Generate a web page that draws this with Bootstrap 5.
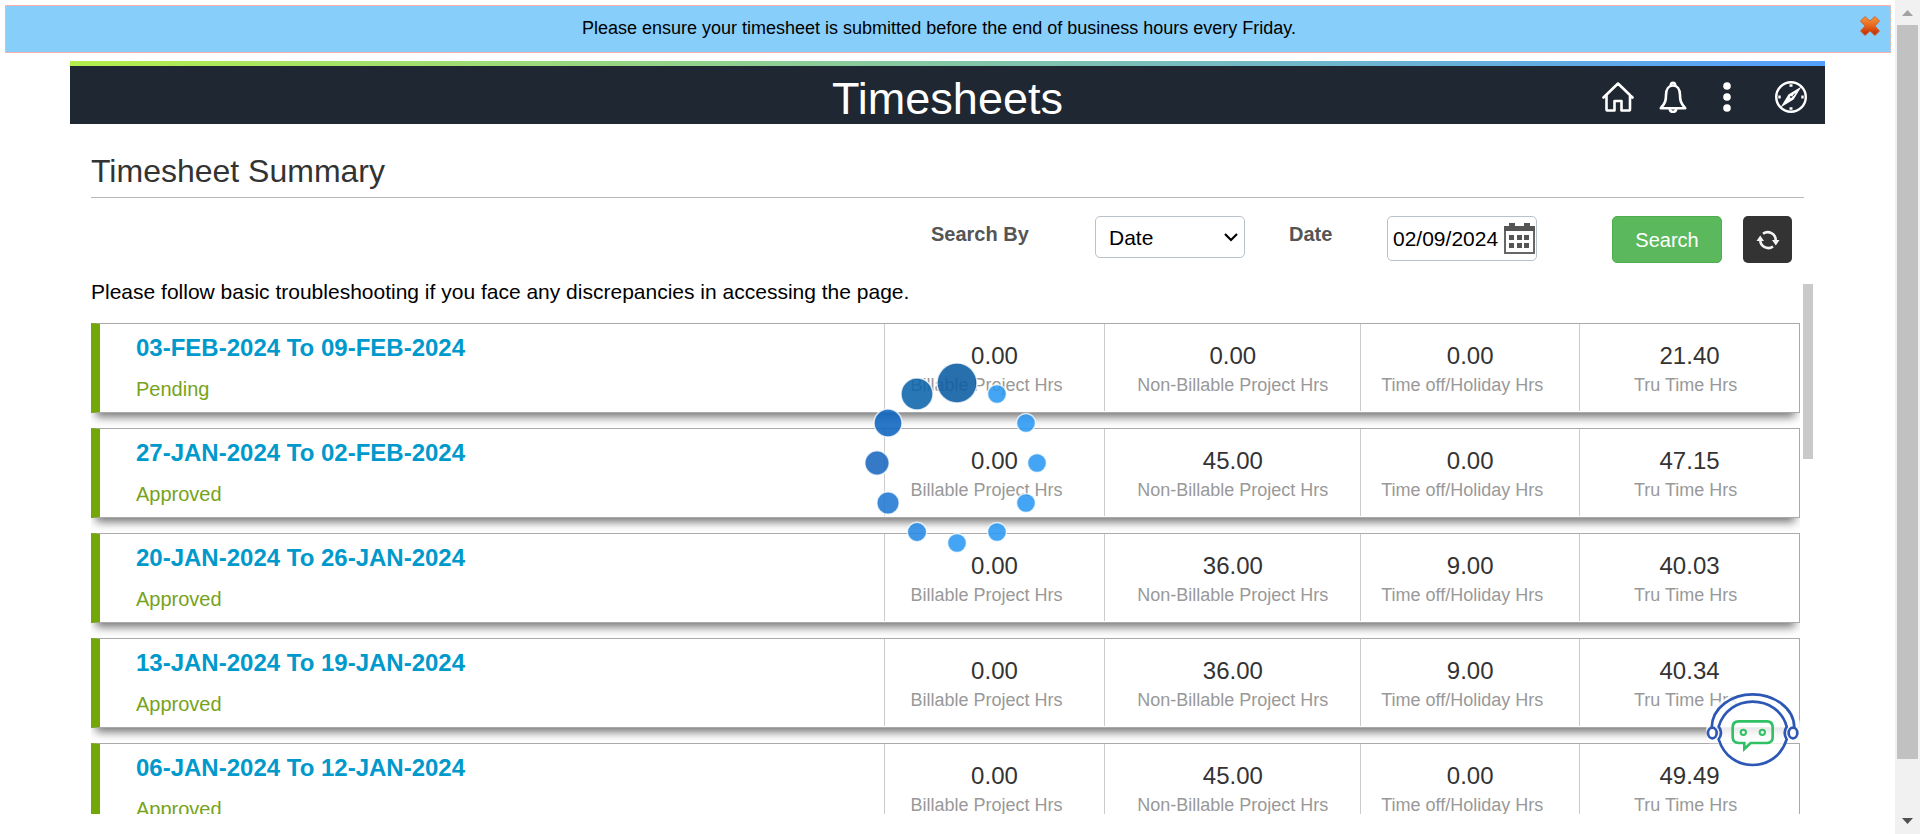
<!DOCTYPE html>
<html lang="en">
<head>
<meta charset="utf-8">
<meta name="viewport" content="width=device-width, initial-scale=1">
<title>Timesheets</title>
<link href="https://cdn.jsdelivr.net/npm/bootstrap@5.3.0/dist/css/bootstrap.min.css" rel="stylesheet">
<style>
  body { font-family: "Liberation Sans", Arial, sans-serif; color: #000; background: #fff; }
  .page-main { padding: 5px 0 20px; min-width: 0; }
  .notice-bar { flex-shrink: 0; margin: 0 4px 8px 5px; height: 48px; padding: 0 3px 0 21px; background: #87cefa; border: 1px dotted #ffb6b0; font-size: 18px; line-height: 24px; }
  .notice-text { padding-top: 10px; }
  .notice-close { width: 36px; height: 32px; padding: 7px 8px 0; line-height: 1; }
  .notice-close svg { display: block; }
  .frame { margin: 0 70px; min-height: 0; }
  .rainbow { height: 5px; flex-shrink: 0; background: linear-gradient(to right, #b4ee4b, #539fff); }
  .app-header { display: grid; grid-template-columns: 1fr auto 1fr; flex-shrink: 0; height: 58px; padding: 4px 18px 0; background: #1e2732; color: #fff; }
  .app-title { font-size: 45px; line-height: 58px; font-weight: 400; margin: 0; }
  .tool-icons { gap: 24px; height: 54px; }
  .tool-icons svg { display: block; }
  .tool-last { margin-left: 11px; }
  .sheet { padding: 0 21px; min-height: 0; }
  .summary-title { font-size: 32px; line-height: 44px; padding: 25px 0 4px; margin: 0; color: #333; font-weight: 400; border-bottom: 1px solid #b8b8b8; }
  .filters { padding: 18px 12px 17px 0; font-size: 20px; }
  .filters label { font-weight: 700; color: #555; line-height: 36px; font-size: 20px; }
  .label-by { width: 164px; }
  .label-date { width: 98px; margin-left: 44px; }
  .filters .by-select { width: 150px; height: 42px; font-size: 21px; line-height: 24px; padding: 5px 32px 4px 13px; color: #000; border-color: #b9c1cb; border-radius: 5px; background-image: url("data:image/svg+xml,%3Csvg xmlns='http://www.w3.org/2000/svg' viewBox='0 0 16 16'%3E%3Cpath d='M2 5l6 6 6-6' fill='none' stroke='%23000' stroke-width='2.2'/%3E%3C/svg%3E"); background-position: right 5px center; background-size: 16px 16px; }
  .date-box { width: 150px; height: 45px; border: 1px solid #b9c1cb; border-radius: 5px; padding: 0 1px 0 5px; }
  .date-box input { min-width: 0; width: 111px; border: 0; padding: 0; font-size: 21px; color: #000; background: none; }
  .date-box button { width: 31px; height: 31px; }
  .btn-find { width: 110px; height: 47px; margin-left: 75px; background: #5cb85c; border: 1px solid #4cae4c; border-radius: 5px; color: #fff; font-size: 20px; padding: 0; }
  .btn-reload { width: 49px; height: 47px; margin-left: 21px; background: #333; border-radius: 5px; padding: 0; }
  .list-shell { margin-right: -9px; gap: 3px; min-height: 0; }
  .list-view { overflow: hidden; min-width: 0; }
  .list-thumb { width: 10px; height: 175px; margin-top: 4px; background: #c9c9c9; }
  .hint { font-size: 21px; line-height: 24px; padding: 0 0 19px; margin: 0; }
  .sheet-card { display: grid; grid-template-columns: 784fr 221fr 256fr 219fr 220fr; height: 90px; margin-bottom: 15px; border: 1px solid #aaa; border-left: 9px solid #73a707; box-shadow: 0 9px 9px -5px rgba(0,0,0,.55); background: #fff; }
  .period { padding: 11px 0 0 36px; }
  .period a { display: block; width: max-content; font-size: 24px; line-height: 26px; font-weight: 700; color: #09c; text-decoration: none; }
  .period span { display: block; font-size: 20px; line-height: 24px; margin-top: 16px; color: #76a31b; }
  .hours { height: 87px; border-left: 1px solid #ccc; text-align: center; padding-top: 18px; }
  .hours strong { display: block; font-size: 24px; line-height: 28px; font-weight: 400; color: #333; }
  .hours span { display: block; font-size: 18px; line-height: 20px; margin-top: 5px; color: #999; white-space: nowrap; }
  .hours .nudge-lg { padding-right: 16px; }
  .hours .nudge-sm { padding-right: 8px; }
  .page-scroll { width: 25px; background: #f1f1f1; padding: 0 2px; }
  .page-scroll .grip { height: 88%; background: #c1c1c1; }
  .page-scroll svg { display: block; }
  .loader { left: calc(50% + 9px); top: calc(50% + 46px); transform: translate(-50%, -50%); pointer-events: none; }
  .bot-button { right: 118px; bottom: 67px; line-height: 0; }
</style>
</head>
<body>
<div class="d-flex vh-100 overflow-hidden position-relative">
  <main class="page-main flex-grow-1 d-flex flex-column position-relative">
    <div class="notice-bar d-flex align-items-start">
      <div class="notice-text flex-grow-1 text-center">Please ensure your timesheet is submitted before the end of business hours every Friday.</div>
      <button class="notice-close btn border-0 flex-shrink-0" type="button" aria-label="Close notice">
        <svg width="22" height="22" viewBox="0 0 22 22"><defs><linearGradient id="ember" x1="0" y1="1" x2="0" y2="21" gradientUnits="userSpaceOnUse"><stop offset="0" stop-color="#f79a3e"/><stop offset=".5" stop-color="#e8641c"/><stop offset="1" stop-color="#b82202"/></linearGradient></defs><path d="M6 1.5L11 6L16 1.5L20.500 6L16 11L20.500 16L16 20.500L11 16L6 20.500L1.500 16L6 11L1.500 6Z" fill="url(#ember)" stroke="#c8683a" stroke-width="1" stroke-linejoin="round"/></svg>
      </button>
    </div>
    <div class="frame flex-grow-1 d-flex flex-column">
      <div class="rainbow"></div>
      <header class="app-header">
        <span></span>
        <h1 class="app-title">Timesheets</h1>
        <nav class="tool-icons d-flex justify-content-end align-items-center" aria-label="Tools">
          <a href="#" aria-label="Home"><svg width="32" height="32" viewBox="0 0 32 32" fill="none" stroke="#fff" stroke-width="2.6" stroke-linecap="round" stroke-linejoin="round"><path d="M1.500 16.500L16 2.500L30.500 16.500M4.500 14V28.500Q4.500 29.500 6 29.500H12.500V20H19.500V29.500H26.500Q28 29.500 28 28.500V14"/></svg></a>
          <a href="#" aria-label="Notifications"><svg width="32" height="32" viewBox="0 0 32 32" fill="none" stroke="#fff" stroke-width="2.600" stroke-linejoin="round"><path d="M2.800 27.200C7.500 22 8 19 8 14C8 8 11 4.500 15 4.500S22 8 22 14C22 19 22.500 22 27.200 27.200Z"/><path d="M12.800 4.500Q12.800 1.800 15 1.800T17.200 4.500M11.500 28Q12.500 31 15 31T18.500 28"/></svg></a>
          <a href="#" aria-label="More actions"><svg width="26" height="32" viewBox="0 0 26 32" fill="#fff"><circle cx="13" cy="5" r="3.800"/><circle cx="13" cy="16" r="3.800"/><circle cx="13" cy="27" r="3.800"/></svg></a>
          <a href="#" aria-label="Navigator" class="tool-last"><svg width="32" height="32" viewBox="0 0 32 32" fill="none" stroke="#fff"><circle cx="16" cy="16" r="14.800" stroke-width="2.400"/><path d="M26.500 5.500L18.600 18.600L5.500 26.500L13.400 13.400Z" fill="#fff" stroke="none"/><path d="M14.500 4.500H17.500M14.500 27.500H17.500M4.500 14.500V17.500M27.500 14.500V17.500" stroke-width="2.400"/><path d="M17.500 15.500L20 12.500" stroke="#1e2732" stroke-width="1"/><circle cx="16" cy="16" r="1" fill="#1e2732" stroke="none"/></svg></a>
        </nav>
      </header>
      <div class="sheet flex-grow-1 d-flex flex-column">
        <h2 class="summary-title">Timesheet Summary</h2>
        <form class="filters d-flex justify-content-end align-items-start">
          <label class="label-by" for="search-by">Search By</label>
          <select class="form-select by-select" id="search-by"><option selected>Date</option><option>Status</option></select>
          <label class="label-date" for="search-date">Date</label>
          <div class="date-box d-flex align-items-center">
            <input type="text" id="search-date" value="02/09/2024">
            <button type="button" class="btn p-0 border-0 rounded-0 lh-1" aria-label="Choose date"><svg class="d-block" width="31" height="31" viewBox="0 0 31 31"><path d="M1 7H30V30H1Z" fill="#fff" stroke="#666" stroke-width="2"/><path d="M0 3H5V0H11V3H20V0H26V3H31V8H0Z" fill="#555"/><path d="M5 12H10V17H5ZM13 12H18V17H13ZM20 12H25V17H20ZM5 20H10V25H5ZM13 20H18V25H13ZM20 20H25V25H20Z" fill="#555"/></svg></button>
          </div>
          <button type="button" class="btn btn-find">Search</button>
          <button type="button" class="btn btn-reload border-0" aria-label="Refresh"><svg width="24" height="24" viewBox="0 0 24 24" fill="none" stroke="#f4f4f4" stroke-width="2.600"><path d="M4.300 12A8 8 0 0 0 17 18.500M19.700 12.500A8 8 0 0 0 7 5.800"/><path d="M.5 13L4.200 7.500L8 13ZM16 12L19.800 17.500L23.500 12Z" fill="#f4f4f4" stroke="none"/></svg></button>
        </form>
        <div class="list-shell flex-grow-1 d-flex align-items-start">
          <section class="list-view flex-grow-1 h-100">
            <p class="hint">Please follow basic troubleshooting if you face any discrepancies in accessing the page.</p>
            <article class="sheet-card">
              <div class="period"><a href="#">03-FEB-2024 To 09-FEB-2024</a><span>Pending</span></div>
              <div class="hours"><strong>0.00</strong><span class="nudge-lg">Billable Project Hrs</span></div>
              <div class="hours"><strong>0.00</strong><span>Non-Billable Project Hrs</span></div>
              <div class="hours"><strong>0.00</strong><span class="nudge-lg">Time off/Holiday Hrs</span></div>
              <div class="hours"><strong>21.40</strong><span class="nudge-sm">Tru Time Hrs</span></div>
            </article>
            <article class="sheet-card">
              <div class="period"><a href="#">27-JAN-2024 To 02-FEB-2024</a><span>Approved</span></div>
              <div class="hours"><strong>0.00</strong><span class="nudge-lg">Billable Project Hrs</span></div>
              <div class="hours"><strong>45.00</strong><span>Non-Billable Project Hrs</span></div>
              <div class="hours"><strong>0.00</strong><span class="nudge-lg">Time off/Holiday Hrs</span></div>
              <div class="hours"><strong>47.15</strong><span class="nudge-sm">Tru Time Hrs</span></div>
            </article>
            <article class="sheet-card">
              <div class="period"><a href="#">20-JAN-2024 To 26-JAN-2024</a><span>Approved</span></div>
              <div class="hours"><strong>0.00</strong><span class="nudge-lg">Billable Project Hrs</span></div>
              <div class="hours"><strong>36.00</strong><span>Non-Billable Project Hrs</span></div>
              <div class="hours"><strong>9.00</strong><span class="nudge-lg">Time off/Holiday Hrs</span></div>
              <div class="hours"><strong>40.03</strong><span class="nudge-sm">Tru Time Hrs</span></div>
            </article>
            <article class="sheet-card">
              <div class="period"><a href="#">13-JAN-2024 To 19-JAN-2024</a><span>Approved</span></div>
              <div class="hours"><strong>0.00</strong><span class="nudge-lg">Billable Project Hrs</span></div>
              <div class="hours"><strong>36.00</strong><span>Non-Billable Project Hrs</span></div>
              <div class="hours"><strong>9.00</strong><span class="nudge-lg">Time off/Holiday Hrs</span></div>
              <div class="hours"><strong>40.34</strong><span class="nudge-sm">Tru Time Hrs</span></div>
            </article>
            <article class="sheet-card">
              <div class="period"><a href="#">06-JAN-2024 To 12-JAN-2024</a><span>Approved</span></div>
              <div class="hours"><strong>0.00</strong><span class="nudge-lg">Billable Project Hrs</span></div>
              <div class="hours"><strong>45.00</strong><span>Non-Billable Project Hrs</span></div>
              <div class="hours"><strong>0.00</strong><span class="nudge-lg">Time off/Holiday Hrs</span></div>
              <div class="hours"><strong>49.49</strong><span class="nudge-sm">Tru Time Hrs</span></div>
            </article>
          </section>
          <div class="list-thumb flex-shrink-0"></div>
        </div>
      </div>
    </div>
    <svg class="loader position-absolute" width="208" height="208" viewBox="-104 -104 208 208" role="img" aria-label="Loading" stroke="#fff" stroke-opacity=".75" stroke-width="1.500" fill-opacity=".88">
      <g fill="#2a98f3"><circle cx="40" cy="-69" r="9.500"/><circle cx="69" cy="-40" r="9.500"/><circle cx="80" cy="0" r="9.500"/><circle cx="69" cy="40" r="9.500"/><circle cx="40" cy="69" r="9.500"/><circle cx="0" cy="80" r="9.500"/></g>
      <circle cx="-40" cy="69" r="9.700" fill="#2689e2"/>
      <circle cx="-69" cy="40" r="11.200" fill="#1f77d2"/>
      <circle cx="-80" cy="0" r="12.200" fill="#1a66bf"/>
      <circle cx="-69" cy="-40" r="14" fill="#0c64bf"/>
      <circle cx="-40" cy="-69" r="16" fill="#0c64ab"/>
      <circle cx="0" cy="-80" r="20" fill="#0a5ca2"/>
    </svg>
  </main>
  <div class="page-scroll d-flex flex-column flex-shrink-0" aria-hidden="true">
    <svg width="21" height="25" viewBox="0 0 21 25"><path d="M5 16L10.500 10L16 16Z" fill="#a3a3a3"/></svg>
    <div class="grip"></div>
    <svg class="mt-auto" width="21" height="25" viewBox="0 0 21 25"><path d="M5 9L10.500 15L16 9Z" fill="#505050"/></svg>
  </div>
  <button type="button" class="bot-button btn p-0 border-0 position-absolute" aria-label="Open help chat">
    <svg width="97" height="77" viewBox="195 90 291 231" fill="none" stroke="#2d57b5" stroke-width="8">
      <path d="M198 210Q208 100 338 96Q468 100 482 200V246H440Q420 320 338 321Q256 318 234 250H206Z" fill="#fff" fill-opacity=".8" stroke="none"/>
      <path d="M215 203C216 142 276 103 338 103S462 142 463 203"/>
      <path d="M236 200C250 152 292 125 338 125S428 152 440 200Q428 218 440 238C424 288 384 315 338 315S252 288 236 238Q250 218 236 200Z"/>
      <ellipse cx="217" cy="219" rx="13" ry="16" fill="#fff"/><ellipse cx="459" cy="219" rx="13" ry="16" fill="#fff"/>
      <g stroke="#2fc164" stroke-width="8"><path d="M296 184H381Q398 184 398 202V231Q398 249 381 249H332L313 267V249H296Q278 249 278 231V202Q278 184 296 184Z"/><circle cx="310" cy="217" r="8" stroke-width="6"/><circle cx="367" cy="217" r="8" stroke-width="6"/></g>
    </svg>
  </button>
</div>
<script src="https://cdn.jsdelivr.net/npm/bootstrap@5.3.0/dist/js/bootstrap.bundle.min.js"></script>
</body>
</html>
